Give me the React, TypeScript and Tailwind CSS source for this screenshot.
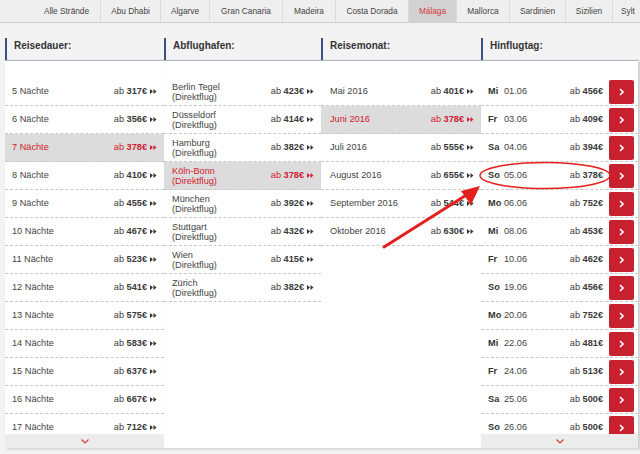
const tabs = [
  { label: "Alle Strände", w: "w-[67px]", first: true },
  { label: "Abu Dhabi", w: "w-[60px]" },
  { label: "Algarve", w: "w-[49px]" },
  { label: "Gran Canaria", w: "w-[73px]" },
  { label: "Madeira", w: "w-[53px]" },
  { label: "Costa Dorada", w: "w-[73px]" },
  { label: "Málaga", w: "w-[48px]", active: true },
  { label: "Mallorca", w: "w-[53px]" },
  { label: "Sardinien", w: "w-[56px]" },
  { label: "Sizilien", w: "w-[47px]" },
  { label: "Sylt", w: "w-[40px]", last: true },
];

const naechte = [
  ["5 Nächte", "317€"],
  ["6 Nächte", "356€"],
  ["7 Nächte", "378€", true],
  ["8 Nächte", "410€"],
  ["9 Nächte", "455€"],
  ["10 Nächte", "467€"],
  ["11 Nächte", "523€"],
  ["12 Nächte", "541€"],
  ["13 Nächte", "575€"],
  ["14 Nächte", "583€"],
  ["15 Nächte", "637€"],
  ["16 Nächte", "667€"],
  ["17 Nächte", "712€"],
];

const flughaefen = [
  ["Berlin Tegel", "423€"],
  ["Düsseldorf", "414€"],
  ["Hamburg", "382€"],
  ["Köln-Bonn", "378€", true],
  ["München", "392€"],
  ["Stuttgart", "432€"],
  ["Wien", "415€"],
  ["Zürich", "382€"],
];

const monate = [
  ["Mai 2016", "401€"],
  ["Juni 2016", "378€", true],
  ["Juli 2016", "555€"],
  ["August 2016", "655€"],
  ["September 2016", "544€"],
  ["Oktober 2016", "630€"],
];

const tage = [
  ["Mi", "01.06", "456€"],
  ["Fr", "03.06", "409€"],
  ["Sa", "04.06", "394€"],
  ["So", "05.06", "378€"],
  ["Mo", "06.06", "752€"],
  ["Mi", "08.06", "453€"],
  ["Fr", "10.06", "462€"],
  ["So", "19.06", "456€"],
  ["Mo", "20.06", "752€"],
  ["Mi", "22.06", "481€"],
  ["Fr", "24.06", "513€"],
  ["Sa", "25.06", "500€"],
  ["So", "26.06", "500€"],
];

const Raquo = ({ red }: { red?: boolean }) => (
  <svg width="7" height="5" viewBox="0 0 7 5" className="ml-[3px] shrink-0">
    <path d="M0 0 L3 2.5 L0 5 Z M3.5 0 L6.5 2.5 L3.5 5 Z" fill={red ? "#d0202f" : "#333"} />
  </svg>
);

const Price = ({ value, red, arrow = true }: any) => (
  <span className={`flex items-center whitespace-nowrap ${red ? "text-[#d0202f]" : "text-[#3a3a3a]"}`}>
    ab&nbsp;<b className="font-bold">{value}</b>
    {arrow ? <Raquo red={red} /> : null}
  </span>
);

const Header = ({ title }: { title: string }) => (
  <div className="h-[22px] border-l-2 border-[#3a5283] pl-[7px] pt-[2px] text-[10px] font-bold leading-[12px] text-[#333]">
    {title}
  </div>
);

const Footer = () => (
  <div className="h-[14px] bg-[#ececec] flex items-center justify-center shrink-0">
    <svg width="8" height="5" viewBox="0 0 8 5">
      <path d="M0.5 0.5 L4 4 L7.5 0.5" fill="none" stroke="#d33a3a" strokeWidth="1.1" />
    </svg>
  </div>
);

const rowBase = "h-[28px] shrink-0 flex items-center justify-between border-b border-dashed border-[#c8c8c8]";

export default function App() {
  return (
    <div
      className="relative w-[640px] h-[454px] overflow-hidden bg-[#f3f3f3] text-[9.2px] text-[#444]"
      style={{ fontFamily: '"Liberation Sans", Arial, sans-serif' }}
    >
      {/* tab bar */}
      <div className="h-[23px] bg-[#efefef] border-b border-[#cfcfcf] flex pl-[33px] overflow-hidden">
        {tabs.map((t) => (
          <div
            key={t.label}
            className={`${t.w} shrink-0 h-full flex items-center pt-[1px] text-[8.3px] whitespace-nowrap ${
              t.last ? "justify-start pl-[8px]" : "justify-center"
            } ${t.first ? "" : "border-l border-[#dcdcdc]"} ${
              t.active ? "bg-[#d2d2d2] text-[#d23c3c]" : "text-[#444]"
            }`}
          >
            {t.label}
          </div>
        ))}
      </div>

      <div className="pt-[15px] pl-[5px] grid grid-cols-[159px_157px_160px_157px] gap-0">
        {/* Reisedauer */}
        <div>
          <Header title="Reisedauer:" />
          <div className="h-[388px] bg-white border-t border-[#aab3c2] shadow-[2px_1px_3px_rgba(0,0,0,0.18)] flex flex-col">
            <div className="flex-1 overflow-hidden pt-[17px] flex flex-col">
              {naechte.map(([n, p, hi]: any) => (
                <div key={n} className={`${rowBase} pl-[7px] pr-[7px] ${hi ? "bg-[#dcdcdc] text-[#d0202f]" : ""}`}>
                  <span>{n}</span>
                  <Price value={p} red={hi} />
                </div>
              ))}
            </div>
            <Footer />
          </div>
        </div>

        {/* Abflughafen */}
        <div>
          <Header title="Abflughafen:" />
          <div className="h-[388px] bg-white border-t border-[#aab3c2] shadow-[2px_1px_3px_rgba(0,0,0,0.18)] pt-[17px] flex flex-col">
            {flughaefen.map(([n, p, hi]: any) => (
              <div key={n} className={`${rowBase} pl-[8px] pr-[7px] ${hi ? "bg-[#dcdcdc] text-[#d0202f]" : ""}`}>
                <span className="leading-[10px]">
                  {n}
                  <br />
                  (Direktflug)
                </span>
                <Price value={p} red={hi} />
              </div>
            ))}
          </div>
        </div>

        {/* Reisemonat */}
        <div>
          <Header title="Reisemonat:" />
          <div className="h-[388px] bg-white border-t border-[#aab3c2] shadow-[2px_1px_3px_rgba(0,0,0,0.18)] pt-[17px] flex flex-col">
            {monate.map(([n, p, hi]: any) => (
              <div key={n} className={`${rowBase} pl-[9px] pr-[7px] ${hi ? "bg-[#dcdcdc] text-[#d0202f]" : ""}`}>
                <span>{n}</span>
                <Price value={p} red={hi} />
              </div>
            ))}
          </div>
        </div>

        {/* Hinflugtag */}
        <div>
          <Header title="Hinflugtag:" />
          <div className="h-[388px] bg-white border-t border-[#aab3c2] shadow-[2px_1px_3px_rgba(0,0,0,0.18)] flex flex-col">
            <div className="flex-1 overflow-hidden pt-[17px] flex flex-col">
              {tage.map(([d, date, p], i) => (
                <div key={i} className={`${rowBase} pl-[7px] pr-[4px]`}>
                  <span className="flex items-center">
                    <b className="font-bold inline-block min-w-[15px] mr-[1px] text-[#333]">{d}</b>
                    <span>{date}</span>
                  </span>
                  <span className="flex items-center">
                    <Price value={p} arrow={false} />
                    <span className="ml-[6px] w-[25px] h-[24px] rounded-[2px] bg-[#c9202f] flex items-center justify-center">
                      <svg width="5" height="8" viewBox="0 0 5 8">
                        <path d="M1 1 L4 4 L1 7" fill="none" stroke="#fff" strokeWidth="1.6" />
                      </svg>
                    </span>
                  </span>
                </div>
              ))}
            </div>
            <Footer />
          </div>
        </div>
      </div>

      {/* annotation overlay */}
      <svg className="absolute inset-0 pointer-events-none" width="640" height="454" viewBox="0 0 640 454">
        <ellipse cx="545" cy="175.5" rx="65" ry="13" fill="none" stroke="#e4201c" strokeWidth="1.5" />
        <line x1="384" y1="247" x2="468" y2="194" stroke="#e4201c" strokeWidth="3" strokeLinecap="round" />
        <path d="M480 186 L461 191 L471 205 Z" fill="#e4201c" />
      </svg>
    </div>
  );
}
